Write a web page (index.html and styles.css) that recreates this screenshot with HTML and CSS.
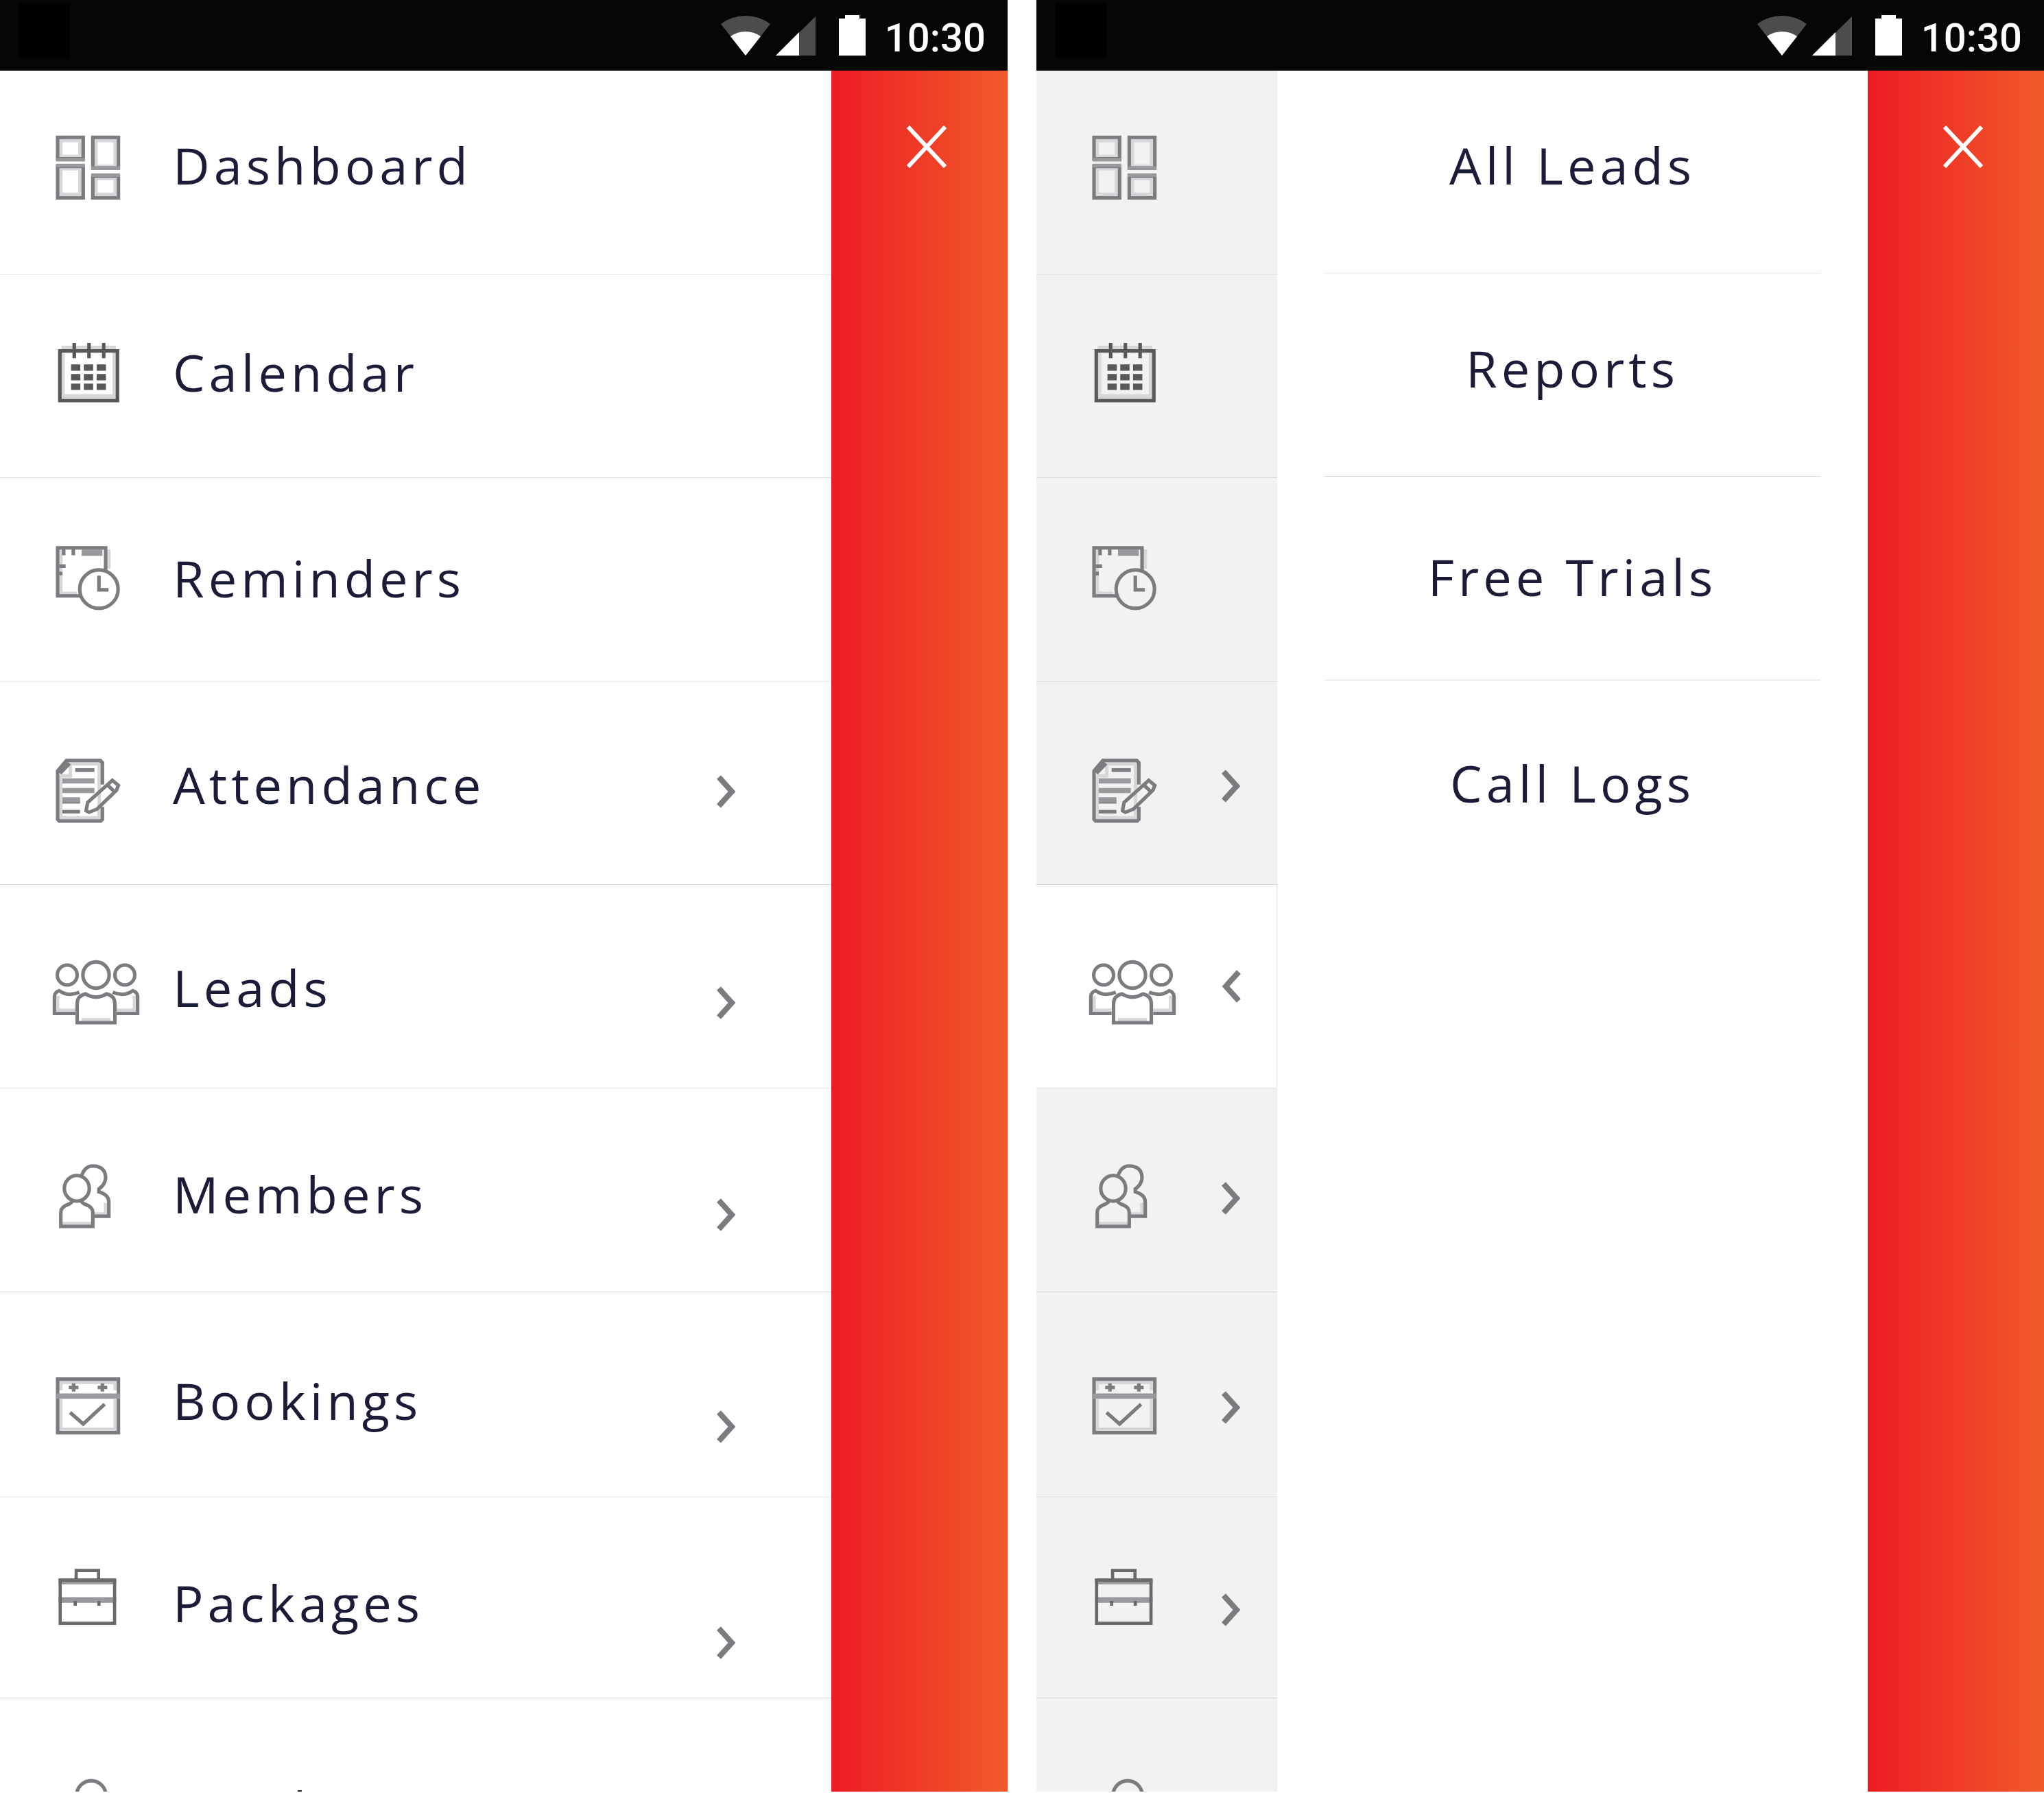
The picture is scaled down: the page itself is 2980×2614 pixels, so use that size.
FILE: index.html
```html
<!DOCTYPE html>
<html lang="en">
<head>
<meta charset="utf-8">
<meta name="viewport" content="width=device-width, initial-scale=1">
<title>Navigation menu</title>
<link rel="stylesheet" href="styles.css">
</head>
<body>
<svg class="sprite" aria-hidden="true">
  <symbol id="dashboard" viewBox="0 0.3 27 20">
    <g class="soft"><path d="M2.5 1.5h6v5h-6zM13.5 1.5h6v8h-6zM2.5 10.3h6v8h-6zM13.5 13.3h6v5h-6z"/></g>
    <path d="M1.5 .5h8v6.7h-8zM12.5 .5h8v9.6h-8zM1.5 9.6h8v9.8h-8zM12.5 12.6h8v6.8h-8z"/>
    <g class="mid"><path d="M1 7.5h9M12 10.1h9M1 9.3h9M12 12.3h9"/></g>
  </symbol>
  <symbol id="calendar" viewBox="0.3 0.3 27 20">
    <g class="soft"><path d="M3.5 3v13.6h16V3M3 1.4h17"/></g>
    <g class="dark">
      <rect x="2.5" y="2.5" width="18" height="15.5"/>
      <path d="M7 0v4.8M11.6 0v4.8M16.2 0v4.8"/>
      <path class="wide" d="M6 7.7h2.9M10 7.7h2.9M14 7.7h2.9M6 10.7h2.9M10 10.7h2.9M14 10.7h2.9M6 13.7h2.9M10 13.7h2.9M14 13.7h2.9"/>
    </g>
  </symbol>
  <symbol id="reminders" viewBox="0 0.2 27 20">
    <g class="soft"><path d="M2.5 1v13.7h5M17.5 1v6"/></g>
    <path d="M16.5 8V.5h-15v15h7"/>
    <path d="M3.4 1v1.8M6.4 1v1.8M2 6.2h2M2 8.5h1"/>
    <g class="mid"><path class="wide" d="M9 2h6.5"/></g>
    <circle cx="14.4" cy="13.4" r="6"/>
    <path d="M14.4 9.2v4.4h3"/>
  </symbol>
  <symbol id="attendance" viewBox="0 0 27 20">
    <g class="soft"><path d="M2.5 5v13.4h12V1.5h-9v3.8h-3"/></g>
    <path d="M15.5 8V1.2L14.8.5H4.3L1.5 3.8v15.1l.5.5h13l.5-.5V15"/>
    <path d="M2 4.3L5 1.2" stroke-width="1.8"/>
    <path d="M7 3.5h6M3 13.4h5.5M3 16.5h5.5"/>
    <g class="mid"><path d="M3 6.9h10M3 9.9h10M3 12.8h5.5" stroke-width="1.6"/></g>
    <path d="M18.6 6.7l1.9 1.6-.6 1.5-6.1 5.9-2.5 1-.9-.5.5-2.6z"/>
    <path d="M17.1 8.2l2 1.9"/>
  </symbol>
  <symbol id="leads" viewBox="0 0.4 27 20">
    <g class="soft"><path d="M1.5 11v4.5H7M25.5 11v4.5H20M9 18.5h9"/></g>
    <circle cx="4.5" cy="4.5" r="3.1"/>
    <circle cx="22.5" cy="4.5" r="3.1"/>
    <circle cx="13.5" cy="4.5" r="4.1"/>
    <path d="M8.3 9.9Q4.6 11.4 2 9.4 .5 9.9 .5 11.3V16.5H7M18.7 9.9Q22.4 11.4 25 9.4 26.5 9.9 26.5 11.3V16.5H20"/>
    <path d="M10.2 10.4Q7.6 11 7.6 13.5V19.4H19.4V13.5Q19.4 11 16.8 10.4 13.5 12.4 10.2 10.4z"/>
  </symbol>
  <symbol id="members" viewBox="0 0.4 27 20">
    <g class="soft"><path d="M3 18.5h9M16.5 12v3.5H13"/></g>
    <ellipse cx="7.5" cy="7.5" rx="3.9" ry="4"/>
    <path d="M9 3.6Q10 .5 12.6 .5 16.5 .7 16.5 4.3 16.3 6.4 14.4 7.7v.9q3.1.9 3.1 3.1V16.2H13"/>
    <path d="M6.2 11.4Q5.8 12.2 4.6 12.6 2.5 13.4 2.5 15V19.4H12.5V15Q12.5 13.4 10.4 12.6 9.2 12.2 8.8 11.4"/>
  </symbol>
  <symbol id="bookings" viewBox="0 0 27 20">
    <g class="soft"><path d="M2.5 6.8v9.4h17V6.8M2.5 4V1.5h17V4"/></g>
    <path d="M1.5 .5h19v16.7h-19z"/>
    <g class="mid"><path d="M1 5.8h20" stroke-width="1.7"/></g>
    <path d="M5 3.1h3M14 3.1h3M6.5 1.8v2.6M15.5 1.8v2.6"/>
    <path d="M5.4 10.9l4.1 3.6 6.7-6.2"/>
  </symbol>
  <symbol id="packages" viewBox="0.2 0 27 20">
    <g class="mid"><path d="M2 3.9h18M2 9.7h18" stroke-width="1.8"/></g>
    <g class="dark thin"><path d="M2.5 3.5h17v13.5h-17zM7.5 3.6V.5h7v3.1M7.2 10v1.5M14.6 10v1.5"/></g>
  </symbol>
  <symbol id="vendors" viewBox="0 -0.3 27 20">
    <ellipse cx="12" cy="5.2" rx="4.6" ry="4.7"/>
    <path d="M4 19.4v-4q1-3.4 5-4.4h6q4 1 5 4.4v4z"/>
  </symbol>
  <symbol id="chevron" viewBox="0 0 28 48">
    <path d="M3 3l19 21L3 45" stroke-width="8"/>
  </symbol>
  <symbol id="chevron-back" viewBox="0 0 28 48">
    <path d="M25 3L6 24l19 21" stroke-width="8"/>
  </symbol>
  <symbol id="close" viewBox="0 0 58 62">
    <path d="M2 2l54 58M56 2L2 60" stroke-width="6"/>
  </symbol>
  <symbol id="wifi" viewBox="0 0 72 59">
    <path fill="#4d4d4d" d="M36 59L0 13Q16 1 36 1T72 13z"/>
    <path fill="#fff" d="M36 59L14 31Q24 24 36 24T58 31z"/>
  </symbol>
  <symbol id="signal" viewBox="0 0 58 59">
    <path fill="#4d4d4d" d="M58 2v57H0z"/>
    <path fill="#fff" d="M34 25v34H0z"/>
  </symbol>
  <symbol id="battery" viewBox="0 0 39 59">
    <path fill="#fff" d="M9 0h21v5h9v54H0V5h9z"/>
  </symbol>
</svg>

<main class="screens">
  <section class="phone" aria-label="Main menu">
    <header class="status">
      <span class="status__app"></span>
      <svg class="status__wifi"><use href="#wifi"/></svg>
      <svg class="status__signal"><use href="#signal"/></svg>
      <svg class="status__battery"><use href="#battery"/></svg>
      <time class="status__time">10:30</time>
    </header>
    <nav class="menu">
      <a class="item" href="#"><svg class="icon top-96"><use href="#dashboard"/></svg><span class="label top-88">Dashboard</span></a>
      <a class="item" href="#"><svg class="icon top-100"><use href="#calendar"/></svg><span class="label top-92">Calendar</span></a>
      <a class="item" href="#"><svg class="icon top-100"><use href="#reminders"/></svg><span class="label top-96">Reminders</span></a>
      <a class="item" href="#"><svg class="icon top-112"><use href="#attendance"/></svg><span class="label top-100">Attendance</span><svg class="chevron top-136"><use href="#chevron"/></svg></a>
      <a class="item" href="#"><svg class="icon top-112"><use href="#leads"/></svg><span class="label top-100">Leads</span><svg class="chevron top-148"><use href="#chevron"/></svg></a>
      <a class="item" href="#"><svg class="icon top-112"><use href="#members"/></svg><span class="label top-104">Members</span><svg class="chevron top-160"><use href="#chevron"/></svg></a>
      <a class="item" href="#"><svg class="icon top-124"><use href="#bookings"/></svg><span class="label top-108">Bookings</span><svg class="chevron top-172"><use href="#chevron"/></svg></a>
      <a class="item" href="#"><svg class="icon top-104"><use href="#packages"/></svg><span class="label top-104">Packages</span><svg class="chevron top-188"><use href="#chevron"/></svg></a>
      <a class="item" href="#"><svg class="icon top-116"><use href="#vendors"/></svg><span class="label top-112">Vendors</span></a>
    </nav>
    <aside class="rail">
      <button class="close" type="button" aria-label="Close menu"><svg class="close__icon"><use href="#close"/></svg></button>
    </aside>
  </section>

  <section class="phone phone--submenu" aria-label="Leads menu">
    <header class="status">
      <span class="status__app"></span>
      <svg class="status__wifi"><use href="#wifi"/></svg>
      <svg class="status__signal"><use href="#signal"/></svg>
      <svg class="status__battery"><use href="#battery"/></svg>
      <time class="status__time">10:30</time>
    </header>
    <nav class="menu menu--compact">
      <a class="item" href="#" aria-label="Dashboard"><svg class="icon top-96"><use href="#dashboard"/></svg></a>
      <a class="item" href="#" aria-label="Calendar"><svg class="icon top-100"><use href="#calendar"/></svg></a>
      <a class="item" href="#" aria-label="Reminders"><svg class="icon top-100"><use href="#reminders"/></svg></a>
      <a class="item" href="#" aria-label="Attendance"><svg class="icon top-112"><use href="#attendance"/></svg><svg class="chevron top-128"><use href="#chevron"/></svg></a>
      <a class="item item--open" href="#" aria-label="Leads"><svg class="icon top-112"><use href="#leads"/></svg><svg class="chevron top-124"><use href="#chevron-back"/></svg></a>
      <a class="item" href="#" aria-label="Members"><svg class="icon top-112"><use href="#members"/></svg><svg class="chevron top-136"><use href="#chevron"/></svg></a>
      <a class="item" href="#" aria-label="Bookings"><svg class="icon top-124"><use href="#bookings"/></svg><svg class="chevron top-144"><use href="#chevron"/></svg></a>
      <a class="item" href="#" aria-label="Packages"><svg class="icon top-104"><use href="#packages"/></svg><svg class="chevron top-140"><use href="#chevron"/></svg></a>
      <a class="item" href="#" aria-label="Vendors"><svg class="icon top-116"><use href="#vendors"/></svg></a>
    </nav>
    <nav class="submenu">
      <a class="subitem" href="#"><span class="label top-88">All Leads</span></a>
      <a class="subitem" href="#"><span class="label top-88">Reports</span></a>
      <a class="subitem" href="#"><span class="label top-96">Free Trials</span></a>
      <a class="subitem" href="#"><span class="label top-100">Call Logs</span></a>
    </nav>
    <aside class="rail">
      <button class="close" type="button" aria-label="Close menu"><svg class="close__icon"><use href="#close"/></svg></button>
    </aside>
  </section>
</main>
</body>
</html>
```
FILE: styles.css
```css
* {
  box-sizing: border-box;
}

body {
  margin: 0;
  background: #fff;
  color: #1b1c38;
  font-family: "Open Sans", "Noto Sans", sans-serif;
}

a {
  color: inherit;
  text-decoration: none;
}

svg {
  display: block;
}

symbol {
  overflow: visible;
}

.sprite {
  display: none;
}

.screens {
  display: grid;
  grid-template-columns: 1fr 1fr;
  gap: 42px;
  height: calc(100vh - 2px);
  overflow: hidden;
}

/* Each phone: status bar over the menu columns and the close rail */
.phone {
  display: grid;
  grid-template-columns: 1fr 257px;
  grid-template-rows: 103px 1fr;
  min-height: 0;
  overflow: hidden;
  background: #fefefe;
}

.phone--submenu {
  grid-template-columns: 351px 1fr 257px;
}

/* Status bar */
.status {
  grid-column: 1 / -1;
  display: flex;
  align-items: flex-start;
  padding: 22px 32px 0 28px;
  background: #050706;
}

.status__app {
  width: 74px;
  height: 80px;
  margin: -17px auto 0 0;
  background: #000;
}

.status__wifi {
  width: 72px;
  height: 59px;
}

.status__signal {
  width: 58px;
  height: 59px;
  margin-left: 8px;
}

.status__battery {
  width: 39px;
  height: 59px;
  margin: 0 28px 0 34px;
}

.status__time {
  color: #fff;
  font: 500 58px/66px Roboto, sans-serif;
}

/* Menu rows */
.menu {
  display: grid;
  grid-template-rows: 298px 296px 297px 296px 297px 297px 299px 293px 297px;
  min-height: 0;
}

.menu--compact {
  background: #f2f2f2;
}

.item {
  display: grid;
  grid-template-columns: 175px 1fr 28px;
  align-items: start;
  padding: 0 139px 0 77px;
  border-bottom: 1px solid #ebebeb;
}

.item:nth-child(even) {
  border-bottom-color: #dadada;
}

.menu--compact .item {
  display: flex;
  justify-content: space-between;
  padding-right: 53px;
  border-bottom-color: #e4e4e4;
}

.menu--compact .item:nth-child(even) {
  border-bottom-color: #d4d4d4;
}

.menu--compact .item--open {
  padding-right: 52px;
  border-right: 1px solid #e8e8e8;
  background: #fefefe;
}

.label {
  font-size: 74px;
  line-height: 100px;
  letter-spacing: 6px;
  white-space: nowrap;
}

/* Submenu */
.submenu {
  display: grid;
  grid-template-rows: 296px 296px 297px 297px;
  padding: 0 69px;
}

.subitem {
  display: flex;
  align-items: flex-start;
  justify-content: center;
  border-bottom: 1px solid #dadada;
}

.subitem:first-child {
  border-bottom-color: #ebebeb;
}

.subitem:last-child {
  border-bottom: 0;
}

/* Line icons */
.icon {
  width: 126px;
  height: 94px;
  overflow: visible;
  fill: none;
  stroke: #7b7c7f;
  stroke-width: 1.1;
}

.soft {
  stroke: #d6d7d9;
}

.mid {
  stroke: #98999c;
}

.dark {
  stroke: #58585a;
}

.thin {
  stroke: #6a6a6b;
  stroke-width: 1;
}

.wide {
  stroke-width: 2;
}

.chevron {
  width: 28px;
  height: 48px;
  fill: none;
  stroke: #7b7c7f;
}

/* Close rail */
.rail {
  padding: 80px 0 0 110px;
  background: linear-gradient(90deg, #ed1c24, #f15a29);
}

.close {
  display: block;
  padding: 0;
  border: 0;
  background: none;
  cursor: pointer;
}

.close__icon {
  width: 58px;
  height: 62px;
  stroke: #fff;
}

/* Vertical spacing scale inside a row, in steps of 4px */
.top-88 { margin-top: 88px; }
.top-92 { margin-top: 92px; }
.top-96 { margin-top: 96px; }
.top-100 { margin-top: 100px; }
.top-104 { margin-top: 104px; }
.top-108 { margin-top: 108px; }
.top-112 { margin-top: 112px; }
.top-116 { margin-top: 116px; }
.top-124 { margin-top: 124px; }
.top-128 { margin-top: 128px; }
.top-136 { margin-top: 136px; }
.top-140 { margin-top: 140px; }
.top-144 { margin-top: 144px; }
.top-148 { margin-top: 148px; }
.top-160 { margin-top: 160px; }
.top-172 { margin-top: 172px; }
.top-188 { margin-top: 188px; }
```
